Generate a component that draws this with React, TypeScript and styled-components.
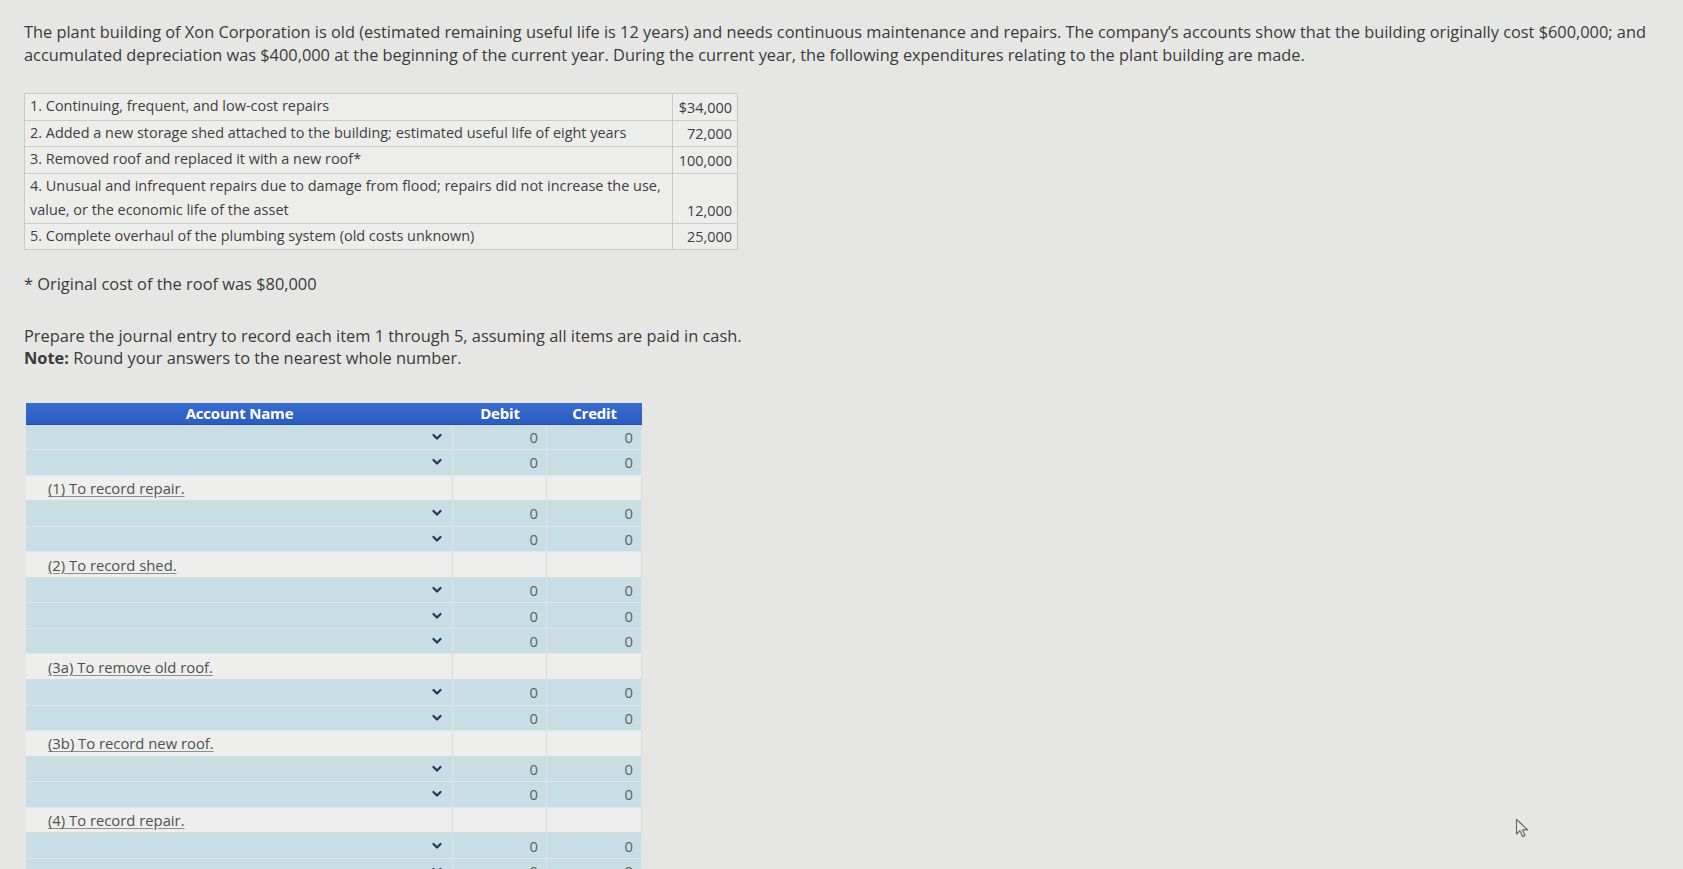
import React from 'react';
import styled, { createGlobalStyle } from 'styled-components';

const GlobalStyle = createGlobalStyle`
  html, body {
    margin: 0;
    padding: 0;
    overflow: hidden;
    background: #e6e7e4;
  }
  body {
    font-family: 'Open Sans', 'Noto Sans', sans-serif;
    color: #3a3b3b;
  }
`;

interface Expenditure {
  lines: string[];
  amount: string;
}

const expenditures: Expenditure[] = [
  { lines: ['1. Continuing, frequent, and low-cost repairs'], amount: '$34,000' },
  { lines: ['2. Added a new storage shed attached to the building; estimated useful life of eight years'], amount: '72,000' },
  { lines: ['3. Removed roof and replaced it with a new roof*'], amount: '100,000' },
  {
    lines: [
      '4. Unusual and infrequent repairs due to damage from flood; repairs did not increase the use,',
      'value, or the economic life of the asset',
    ],
    amount: '12,000',
  },
  { lines: ['5. Complete overhaul of the plumbing system (old costs unknown)'], amount: '25,000' },
];

interface Entry {
  label: string;
  rows: number;
}

const entries: Entry[] = [
  { label: '(1) To record repair.', rows: 2 },
  { label: '(2) To record shed.', rows: 2 },
  { label: '(3a) To remove old roof.', rows: 3 },
  { label: '(3b) To record new roof.', rows: 2 },
  { label: '(4) To record repair.', rows: 2 },
  { label: '(5) To record overhaul.', rows: 2 },
];

const Page = styled.main`
  position: relative;
  width: 1683px;
  height: 869px;
  padding: 21px 0 0 24px;
  box-sizing: border-box;
`;

const Intro = styled.p`
  margin: 0;
  width: 1652px;
  font-size: 16.35px;
  line-height: 23px;
`;

const ItemsTable = styled.table`
  margin-top: 26px;
  width: 714px;
  border-collapse: collapse;
  font-size: 14.45px;
  background: #edeeeb;
`;

const ItemCell = styled.td`
  border: 1px solid #c9cbc8;
  padding: 0 5px;
  height: 24.5px;
  line-height: 24.5px;
  vertical-align: top;
  color: #3d3e3e;
  white-space: nowrap;
`;

const AmountCell = styled(ItemCell)`
  width: 54px;
  text-align: right;
  vertical-align: bottom;
  line-height: 22px;
  padding-bottom: 1px;
`;

const TextLine = styled.span`
  display: block;
`;

const Footnote = styled.p`
  margin: 23px 0 0;
  font-size: 16.4px;
  line-height: 22px;
`;

const Instructions = styled.p`
  margin: 30px 0 0;
  font-size: 16.4px;
  line-height: 22px;

  b {
    font-weight: 700;
  }
`;

const Journal = styled.div`
  margin: 34px 0 0 2px;
  display: grid;
  grid-template-columns: 427px 94px 95px;
  grid-template-rows: 21.5px;
  grid-auto-rows: 25.55px;
  width: 616px;
  font-size: 14.8px;
`;

const HeadCell = styled.div`
  display: flex;
  align-items: center;
  justify-content: center;
  background: linear-gradient(#3a6dd0, #2b5cc0);
  color: #ffffff;
  font-weight: 700;
  font-size: 15px;
  letter-spacing: -0.2px;
  border-bottom: 1px solid #24509f;
`;

const Cell = styled.div<{ $blank?: boolean; $num?: boolean }>`
  box-sizing: border-box;
  display: flex;
  align-items: center;
  justify-content: ${({ $num }) => ($num ? 'flex-end' : 'space-between')};
  padding: ${({ $num }) => ($num ? '0 8px 0 0' : '0 0 0 22px')};
  background: ${({ $blank }) => ($blank ? '#eeefec' : '#c8dde4')};
  border-right: 1px solid ${({ $blank }) => ($blank ? '#d6dbdb' : '#dbe7ea')};
  border-bottom: 1px solid ${({ $blank }) => ($blank ? '#d6dbdb' : '#dbe7ea')};
  color: #5a6366;
`;

const EntryLabel = styled.a`
  color: #4c5152;
  text-decoration: underline;
  text-decoration-color: #8a8f90;
  text-underline-offset: 2px;
`;

const Chevron = styled.svg`
  margin-right: 10px;
  flex-shrink: 0;
`;

const Pointer = styled.svg`
  position: absolute;
  left: 1515px;
  top: 818px;
`;

const ChevronIcon: React.FC = () => (
  <Chevron width="10" height="8" viewBox="0 0 10 8">
    <polyline points="1.5,2 5,5.5 8.5,2" fill="none" stroke="#1f3a5c" strokeWidth="2.2" strokeLinecap="round" strokeLinejoin="round" />
  </Chevron>
);

const EntryRow: React.FC = () => (
  <>
    <Cell>
      <span />
      <ChevronIcon />
    </Cell>
    <Cell $num>0</Cell>
    <Cell $num>0</Cell>
  </>
);

const App: React.FC = () => (
  <Page>
    <GlobalStyle />
    <Intro>
      The plant building of Xon Corporation is old (estimated remaining useful life is 12 years) and needs continuous
      maintenance and repairs. The company&rsquo;s accounts show that the building originally cost $600,000; and
      accumulated depreciation was $400,000 at the beginning of the current year. During the current year, the
      following expenditures relating to the plant building are made.
    </Intro>

    <ItemsTable>
      <tbody>
        {expenditures.map((item) => (
          <tr key={item.amount}>
            <ItemCell>
              {item.lines.map((line) => (
                <TextLine key={line}>{line}</TextLine>
              ))}
            </ItemCell>
            <AmountCell>{item.amount}</AmountCell>
          </tr>
        ))}
      </tbody>
    </ItemsTable>

    <Footnote>* Original cost of the roof was $80,000</Footnote>

    <Instructions>
      Prepare the journal entry to record each item 1 through 5, assuming all items are paid in cash.
      <br />
      <b>Note:</b> Round your answers to the nearest whole number.
    </Instructions>

    <Journal>
      <HeadCell>Account Name</HeadCell>
      <HeadCell>Debit</HeadCell>
      <HeadCell>Credit</HeadCell>
      {entries.map((entry) => (
        <React.Fragment key={entry.label}>
          {Array.from({ length: entry.rows }).map((_, i) => (
            <EntryRow key={i} />
          ))}
          <Cell $blank>
            <EntryLabel>{entry.label}</EntryLabel>
          </Cell>
          <Cell $blank />
          <Cell $blank />
        </React.Fragment>
      ))}
    </Journal>

    <Pointer width="16" height="22" viewBox="0 0 16 22">
      <path d="M1.5 1.5 L1.5 16 L5 12.8 L7.6 18.6 L10 17.5 L7.5 11.8 L12.5 11.8 Z" fill="#e9e9e6" stroke="#6b6c6a" strokeWidth="1.2" strokeLinejoin="round" />
    </Pointer>
  </Page>
);

export default App;
